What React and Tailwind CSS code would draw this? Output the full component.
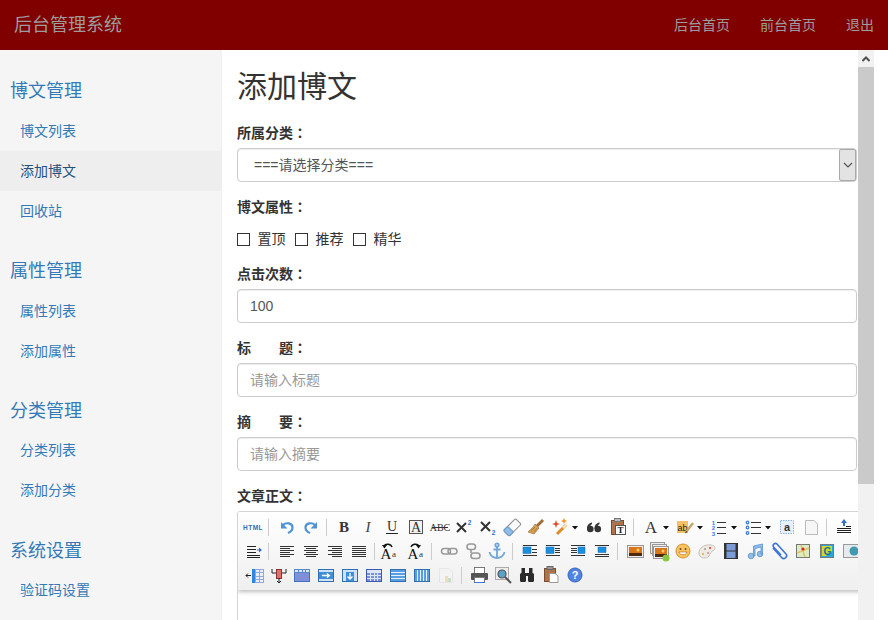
import React from "react";

const FONT = { fontFamily: '"Liberation Sans","Noto Sans CJK SC",sans-serif' };
const SERIF = '"Liberation Serif",serif';
const SANS = '"Liberation Sans",sans-serif';

function Lines({ rows, color = "#333" }) {
  return rows.map(([x1, x2, y], i) => <line key={i} x1={x1} x2={x2} y1={y + 0.5} y2={y + 0.5} stroke={color} strokeWidth="1" />);
}
function Grid({ x = 6, y = 6, w = 14, h = 12, cols = 3, rows = 3, fill = "#dbe6f6", stroke = "#3f74c4" }) {
  const v = [], s = [];
  for (let i = 1; i < cols; i++) v.push(Math.round(x + (w * i) / cols));
  for (let i = 1; i < rows; i++) s.push(Math.round(y + (h * i) / rows));
  return (
    <g>
      <rect x={x + 0.5} y={y + 0.5} width={w} height={h} fill={fill} stroke={stroke} />
      {v.map((a) => <line key={a} x1={a + 0.5} x2={a + 0.5} y1={y} y2={y + h} stroke={stroke} />)}
      {s.map((a) => <line key={a} x1={x} x2={x + w} y1={a + 0.5} y2={a + 0.5} stroke={stroke} />)}
    </g>
  );
}
const Sunset = ({ x = 5, y = 7, w = 14, h = 10 }) => (
  <g>
    <rect x={x - 0.5} y={y - 0.5} width={w + 1} height={h + 1} fill="#eee" stroke="#999" />
    <rect x={x + 1} y={y + 1} width={w - 2} height={h - 2} fill="#d9761a" />
    <rect x={x + 1} y={y + h - 4} width={w - 2} height={3} fill="#4a2a10" />
    <circle cx={x + w - 5} cy={y + 4} r="1.5" fill="#ffd060" />
  </g>
);
const Blue = ({ x, y, w, h }) => <rect x={x} y={y} width={w} height={h} fill="#1b8fe0" stroke="#1767b0" strokeWidth="0.5" />;

const ICONS = {
  html: <text x="12" y="14.5" textAnchor="middle" fontFamily={SANS} fontSize="6.5" fontWeight="700" letterSpacing="0.5" fill="#2f6fb5">HTML</text>,
  undo: <g fill="none"><path d="M8 10 C11 7 17.5 8 17.5 12.5 C17.5 15 15.5 17 13 18" stroke="#4f93d6" strokeWidth="2.2" /><path d="M6 7 L6 13.5 L12.5 13.5 Z" fill="#4f93d6" /></g>,
  redo: <g fill="none"><path d="M16 10 C13 7 6.5 8 6.5 12.5 C6.5 15 8.5 17 11 18" stroke="#4f93d6" strokeWidth="2.2" /><path d="M18 7 L18 13.5 L11.5 13.5 Z" fill="#4f93d6" /></g>,
  b: <text x="12" y="17" textAnchor="middle" fontFamily={SERIF} fontSize="15" fontWeight="700" fill="#333">B</text>,
  i: <text x="12" y="17" textAnchor="middle" fontFamily={SERIF} fontSize="15" fontStyle="italic" fill="#444">I</text>,
  u: <g><text x="12" y="15.5" textAnchor="middle" fontFamily={SERIF} fontSize="14" fill="#333">U</text><line x1="6" x2="18" y1="18.5" y2="18.5" stroke="#222" /></g>,
  boxa: <g><rect x="5.5" y="5.5" width="13" height="13" fill="#f2f2f2" stroke="#555" /><text x="12" y="17" textAnchor="middle" fontFamily={SERIF} fontSize="14" fill="#333">A</text></g>,
  abc: <g><text x="12" y="16" textAnchor="middle" fontFamily={SERIF} fontSize="10" fill="#333">ABC</text><line x1="4" x2="20" y1="12.5" y2="12.5" stroke="#333" /></g>,
  sup: <g><path d="M5 8 L14 17 M14 8 L5 17" stroke="#333" strokeWidth="2" /><text x="17.5" y="10" textAnchor="middle" fontFamily={SANS} fontSize="6.5" fontWeight="700" fill="#2d6fd6">2</text></g>,
  sub: <g><path d="M5 7 L14 16 M14 7 L5 16" stroke="#333" strokeWidth="2" /><text x="17.5" y="20" textAnchor="middle" fontFamily={SANS} fontSize="6.5" fontWeight="700" fill="#2d6fd6">2</text></g>,
  eraser: <g transform="rotate(-45 12 12)"><rect x="3.5" y="8.5" width="17" height="8" rx="1.5" fill="#fafafa" stroke="#8a8a8a" /><rect x="3.5" y="8.5" width="6" height="8" rx="1.5" fill="#8fbce8" stroke="#6a9acb" /></g>,
  brush: <g><path d="M18 4 L20 6 L14 12 L12 10 Z" fill="#a06a30" /><path d="M11 9 L15 13 L10 19 L4 17 C6 15 9 13 11 9 Z" fill="#d9a050" stroke="#8f6428" strokeWidth="0.6" /><path d="M7 16 L11 12 M10 17 L13 13" stroke="#8f6428" strokeWidth="0.6" /></g>,
  wand: <g><path d="M9 19 L18 10" stroke="#e08a2c" strokeWidth="3" /><path d="M15 13 L18 10" stroke="#f5e0b0" strokeWidth="3" /><path d="M8 5 L9 8 L12 9 L9 10 L8 13 L7 10 L4 9 L7 8 Z" fill="#e0492a" /><path d="M16 3 L17 5 L19 6 L17 7 L16 9 L15 7 L13 6 L15 5 Z" fill="#f29a2e" /></g>,
  quote: <g fill="#333"><circle cx="8.3" cy="14" r="3.3" /><path d="M5 14 C5 10 7 8 10 7.5 L10 9 C8.5 10 8 11 8 12 Z" /><circle cx="15.8" cy="14" r="3.3" /><path d="M12.5 14 C12.5 10 14.5 8 17.5 7.5 L17.5 9 C16 10 15.5 11 15.5 12 Z" /></g>,
  pastet: <g><rect x="5.5" y="5.5" width="12" height="14" fill="#b0724a" stroke="#7b4c2c" /><rect x="8.5" y="3.5" width="6" height="3" fill="#bbb" stroke="#777" /><rect x="9.5" y="10.5" width="10" height="9" fill="#fff" stroke="#555" /><text x="14.5" y="18" textAnchor="middle" fontFamily={SERIF} fontSize="9" fontWeight="700" fill="#222">T</text></g>,
  fonta: <text x="12" y="18" textAnchor="middle" fontFamily={SERIF} fontSize="17" fill="#333">A</text>,
  hilite: <g><rect x="4" y="6" width="11" height="12" fill="#f6c166" /><text x="9.5" y="15.5" textAnchor="middle" fontFamily={SANS} fontSize="9" fill="#222">ab</text><path d="M13 17 L20 8" stroke="#c9a36a" strokeWidth="2.4" /><path d="M12 18.5 L13 16 L14.5 17 Z" fill="#333" /></g>,
  ol: <g><text x="6.5" y="9.5" textAnchor="middle" fontFamily={SANS} fontSize="6" fontWeight="700" fill="#3a78dd">1</text><text x="6.5" y="15" textAnchor="middle" fontFamily={SANS} fontSize="6" fontWeight="700" fill="#3a78dd">2</text><text x="6.5" y="20.5" textAnchor="middle" fontFamily={SANS} fontSize="6" fontWeight="700" fill="#3a78dd">3</text><Lines rows={[[10, 19, 7], [10, 19, 12], [10, 19, 18]]} /></g>,
  ul: <g><circle cx="6.5" cy="7.5" r="1.3" fill="none" stroke="#3a78dd" strokeWidth="1.2" /><circle cx="6.5" cy="12.5" r="1.3" fill="none" stroke="#3a78dd" strokeWidth="1.2" /><circle cx="6.5" cy="18" r="1.3" fill="none" stroke="#3a78dd" strokeWidth="1.2" /><Lines rows={[[10, 20, 7], [10, 20, 12], [10, 20, 18]]} /></g>,
  boxaa: <g><rect x="5.5" y="5.5" width="13" height="13" fill="#e6effa" stroke="#8db2e6" strokeDasharray="1.5 1" /><text x="12" y="16" textAnchor="middle" fontFamily={SANS} fontSize="11" fontWeight="700" fill="#333">a</text></g>,
  doc: <path d="M6.5 5.5 H15 L18.5 9 V19.5 H6.5 Z" fill="#f6f6f6" stroke="#bbb" />,
  indentup: <g><path d="M12 4 L15 8 H13 V11 H11 V8 H9 Z" fill="#2e72c8" /><Lines rows={[[14, 19, 11], [5, 19, 13], [5, 19, 15], [5, 19, 17]]} color="#222" /></g>,
  indentin: <g><Lines rows={[[6, 15, 7], [6, 15, 10], [6, 15, 13], [6, 19, 16], [6, 19, 18]]} color="#222" /><path d="M16 10.5 H18 V8.5 L21 11 L18 13.5 V11.5 H16 Z" fill="#2e72c8" /></g>,
  al: <Lines rows={[[5, 19, 7], [5, 15, 9], [5, 19, 11], [5, 15, 13], [5, 19, 15], [5, 15, 17]]} />,
  ac: <Lines rows={[[5, 19, 7], [7, 17, 9], [5, 19, 11], [7, 17, 13], [5, 19, 15], [7, 17, 17]]} />,
  ar: <Lines rows={[[5, 19, 7], [9, 19, 9], [5, 19, 11], [9, 19, 13], [5, 19, 15], [9, 19, 17]]} />,
  aj: <Lines rows={[[5, 19, 7], [5, 19, 9], [5, 19, 11], [5, 19, 13], [5, 19, 15], [5, 19, 17]]} />,
  ltr: <g><text x="9" y="20" textAnchor="middle" fontFamily={SERIF} fontSize="15" fill="#111">A</text><text x="17" y="18" textAnchor="middle" fontFamily={SERIF} fontSize="9" fill="#333">a</text><path d="M15 8 C14 4.5 8 4.5 7.5 7" fill="none" stroke="#111" strokeWidth="1.3" /><path d="M5 6 L10 6 L7.5 9.5 Z" fill="#111" /></g>,
  rtl: <g><text x="9" y="20" textAnchor="middle" fontFamily={SERIF} fontSize="15" fill="#111">A</text><text x="17" y="18" textAnchor="middle" fontFamily={SERIF} fontSize="9" fill="#333">a</text><path d="M7 8 C8 4.5 14 4.5 14.5 7" fill="none" stroke="#111" strokeWidth="1.3" /><path d="M12 6 L17 6 L14.5 9.5 Z" fill="#111" /></g>,
  link: <g fill="none" stroke="#999" strokeWidth="1.5"><rect x="4.5" y="9.5" width="9" height="5.5" rx="2.7" /><rect x="11" y="9.5" width="9" height="5.5" rx="2.7" /></g>,
  unlink: <g fill="none" stroke="#999" strokeWidth="1.6"><rect x="6" y="5" width="8.5" height="5.5" rx="2.7" /><rect x="10" y="14" width="9" height="5.5" rx="2.7" /><path d="M10 10.5 V14" /></g>,
  anchor: <g fill="none" stroke="#6ea5dc" strokeWidth="1.8"><circle cx="12" cy="6" r="1.7" /><path d="M12 8 V19 M8.5 10.5 H15.5 M4.5 13 C5 17 9 19 12 19 C15 19 19 17 19.5 13" /></g>,
  imgl: <g><Lines rows={[[5, 19, 6], [14, 19, 10], [14, 19, 13], [5, 19, 16]]} /><Blue x={5} y={8} w={8} h={6.5} /></g>,
  imgr: <g><Lines rows={[[4, 18, 6], [13, 18, 9], [13, 18, 11], [13, 18, 13], [4, 18, 16]]} /><Blue x={4} y={8} w={8} h={6.5} /></g>,
  imgn: <g><Lines rows={[[5, 19, 6], [5, 11, 9], [5, 11, 11], [5, 11, 13], [5, 19, 16]]} /><Blue x={12} y={8} w={7} h={6.5} /></g>,
  imgc: <g><Lines rows={[[5, 19, 6], [5, 19, 15], [5, 19, 17]]} /><Blue x={8} y={8} w={8} h={5.5} /></g>,
  image: <Sunset x={5} y={7} w={15} h={11} />,
  multi: <g><rect x="3.5" y="3.5" width="14" height="11" fill="#eee" stroke="#999" /><rect x="5.5" y="5.5" width="14" height="11" fill="#eee" stroke="#999" /><Sunset x={7} y={8} w={14} h={11} /><circle cx="19" cy="19" r="3.5" fill="#8cc63f" /></g>,
  emoji: <g><circle cx="12" cy="12" r="7" fill="#f7c35c" stroke="#dd8f2e" /><circle cx="9.5" cy="10" r="1" fill="#7a4a1a" /><circle cx="14.5" cy="10" r="1" fill="#7a4a1a" /><path d="M8 13 H16 C15.5 16.5 8.5 16.5 8 13 Z" fill="#fff" stroke="#a35f20" strokeWidth="0.6" /></g>,
  palette: <g><path d="M4 15 C3 9 10 5 16 6 C20 6.5 21 9 19 11 C16 13 15 14 14 17 C12 20 5 20 4 15 Z" fill="#eeeae2" stroke="#c8c4ba" /><circle cx="15" cy="9" r="1" fill="#d33" /><circle cx="10" cy="10" r="1" fill="#9a9" /><circle cx="13" cy="14" r="1" fill="#d88" /><circle cx="8" cy="15" r="1" fill="#e9a93a" /></g>,
  video: <g><rect x="5" y="4" width="14" height="16" fill="#333" /><rect x="7.5" y="5" width="9" height="6.5" fill="#7b9ad8" /><rect x="7.5" y="12.5" width="9" height="6.5" fill="#7b9ad8" /></g>,
  music: <g fill="#8fbce8" stroke="#5c93d1" strokeWidth="0.8"><circle cx="8" cy="17" r="2.8" /><circle cx="17" cy="15" r="2.8" /><path d="M10.5 17 V7 L19.5 5 V15 H18 V8 L12 9.5 V17 Z" /></g>,
  clip: <g fill="none" stroke="#3c74d8" strokeWidth="1.6"><path d="M6 9 L15 19 C18 21 21 17 19 15 L10 5 C8.5 3.5 5 5 6.5 8 L14 16" /></g>,
  map: <g><rect x="5.5" y="5.5" width="13" height="13" fill="#d9ecc4" stroke="#777" /><path d="M6 14 L18 9 M10 6 L14 18" stroke="#e2c26a" strokeWidth="1.5" /><circle cx="12" cy="10" r="1.6" fill="#d22" /></g>,
  gmap: <g><rect x="5.5" y="5.5" width="13" height="13" fill="#29a8dd" stroke="#777" /><path d="M7 7 H17 V12 L11 17 H7 Z" fill="#cfd926" /><text x="12.5" y="16" textAnchor="middle" fontFamily={SANS} fontSize="10" fontWeight="700" fill="#1a6aa8">G</text></g>,
  globe: <g><rect x="4.5" y="5.5" width="16" height="13" fill="#e6e9ee" stroke="#999" /><circle cx="15" cy="12" r="4.5" fill="#3d9ab0" /></g>,
  tInsCol: <g><Grid x={13} y={6} w={8} h={13} cols={2} rows={4} fill="#eaf0fa" stroke="#8fa9dc" /><rect x="10" y="6" width="3" height="14" fill="#2f86e0" /><path d="M4 12.5 H9 M6 10.5 L4 12.5 L6 14.5" stroke="#222" fill="none" /></g>,
  tDelCol: <g><rect x="10.5" y="6.5" width="5" height="9" fill="#e07070" stroke="#8f3030" /><path d="M6 6 V10 H10 M20 6 V10 H16 M13 15 V20 M11 18 L13 20 L15 18" fill="none" stroke="#222" /></g>,
  tMerge: <g><rect x="4.5" y="6.5" width="15" height="12" fill="#8090d8" stroke="#3f74c4" /><Grid x={4} y={6} w={15} h={3} cols={4} rows={1} fill="#dbe6f6" stroke="#5a87cc" /></g>,
  tRight: <g><rect x="4.5" y="6.5" width="15" height="12" fill="#cfe2f7" stroke="#2f6fb5" /><rect x="5" y="9" width="14" height="7" fill="#3f8fd6" /><path d="M8 12.5 H15 M13 10.5 L15.5 12.5 L13 14.5" stroke="#fff" strokeWidth="1.3" fill="none" /></g>,
  tDown: <g><rect x="4.5" y="6.5" width="15" height="12" fill="#cfe2f7" stroke="#2f6fb5" /><rect x="8" y="9" width="8" height="9" fill="#3f8fd6" /><path d="M12 10 V16 M9.5 13.5 L12 16 L14.5 13.5" stroke="#fff" strokeWidth="1.3" fill="none" /></g>,
  tGrid: <g><Grid x={4} y={6} w={15} h={12} cols={4} rows={4} fill="#7d8fdc" stroke="#dbe6f6" /><rect x="4.5" y="6.5" width="15" height="12" fill="none" stroke="#3a58b4" /><rect x="5" y="7" width="14" height="2.5" fill="#dbe6f6" /></g>,
  tRows: <g><Grid x={4} y={6} w={15} h={12} cols={1} rows={4} fill="#5a9ee0" stroke="#e6f0fb" /><rect x="4.5" y="6.5" width="15" height="12" fill="none" stroke="#2f6fb5" /></g>,
  tCols: <g><Grid x={4} y={6} w={15} h={12} cols={5} rows={1} fill="#5a9ee0" stroke="#e6f0fb" /><rect x="4.5" y="6.5" width="15" height="12" fill="none" stroke="#2f6fb5" /></g>,
  tFade: <g opacity="0.55"><path d="M5.5 5.5 H15 L18.5 9 V19.5 H5.5 Z" fill="#f4f4f4" stroke="#ddd" /><rect x="11" y="13" width="3" height="6" fill="#e8d28a" /><rect x="14" y="15" width="3" height="4" fill="#a8d0a0" /></g>,
  print: <g><rect x="7.5" y="4.5" width="10" height="6" fill="#fff" stroke="#777" /><rect x="4" y="10" width="17" height="7" rx="1" fill="#555" /><rect x="7.5" y="14.5" width="10" height="5" fill="#fff" stroke="#777" /><rect x="7" y="19" width="11" height="1" fill="#3a78dd" /></g>,
  preview: <g><rect x="4.5" y="4.5" width="13" height="12" fill="#eee" stroke="#aaa" /><circle cx="11" cy="11" r="4" fill="#5aa0c8" stroke="#555" strokeWidth="1.2" /><path d="M14 14 L20 20" stroke="#555" strokeWidth="2.2" /></g>,
  search: <g fill="#2a2a2a"><rect x="5" y="10" width="6" height="9" rx="1.5" /><rect x="13" y="10" width="6" height="9" rx="1.5" /><rect x="6.5" y="5" width="3.5" height="6" /><rect x="14" y="5" width="3.5" height="6" /><rect x="10" y="10" width="4" height="3" /></g>,
  pastep: <g><rect x="5.5" y="5.5" width="11" height="13" fill="#b0724a" stroke="#7b4c2c" /><rect x="8" y="3.5" width="6" height="3" fill="#999" stroke="#666" /><path d="M10.5 10.5 H16 L19 13 V19.5 H10.5 Z" fill="#fff" stroke="#999" /></g>,
  help: <g><circle cx="12" cy="12" r="7" fill="#4f84e2" stroke="#3564bb" /><text x="12" y="16" textAnchor="middle" fontFamily={SANS} fontSize="11" fontWeight="700" fill="#fff">?</text></g>,
};

const Icon = ({ n }) => (
  <svg width="24" height="24" viewBox="0 0 24 24" className="block shrink-0">{ICONS[n]}</svg>
);
const Caret = () => (
  <svg width="10" height="24" viewBox="0 0 10 24" className="block shrink-0"><path d="M0 11 H6 L3 14.5 Z" fill="#111" /></svg>
);
const Sep = ({ className }) => (
  <div className={`h-6 shrink-0 flex items-center ${className}`}><div className="ml-[3px] w-px h-[17px] bg-[#ccc]" /></div>
);
const Sep9 = () => <Sep className="w-[9px]" />;

function ToolRow({ names, className = "" }) {
  return <div className={`flex h-6 ${className}`}>{names.map((n, i) => (n === "|" ? <Sep9 key={i} /> : n === "v" ? <Caret key={i} /> : n === "|10" ? <Sep key={i} className="w-[10px]" /> : n === "|6" ? <Sep key={i} className="w-[6px]" /> : n === "_3" ? <div key={i} className="w-[3px] shrink-0" /> : <Icon key={i} n={n} />))}</div>;
}

function Toolbar() {
  return (
    <div className="border border-[#d4d4d4] rounded-[3px] overflow-hidden h-[130px] w-[660px]">
      <div className="pt-[3px] pb-[3px] pl-[3px] overflow-hidden bg-gradient-to-b from-white to-[#efefef] shadow-[0_2px_4px_rgba(0,0,0,0.25)] relative">
        <ToolRow names={["html", "|10", "undo", "redo", "|", "b", "i", "u", "boxa", "abc", "sup", "sub", "eraser", "brush", "wand", "v", "quote", "pastet", "|", "fonta", "v", "hilite", "v", "ol", "v", "ul", "v", "boxaa", "doc", "|", "indentup"]} />
        <ToolRow names={["indentin", "|10", "al", "ac", "ar", "aj", "|6", "ltr", "_3", "rtl", "|", "link", "unlink", "anchor", "|", "imgl", "imgr", "imgn", "imgc", "|", "image", "multi", "emoji", "palette", "video", "music", "clip", "map", "gmap", "globe"]} />
        <ToolRow className="ml-px" names={["tInsCol", "tDelCol", "tMerge", "tRight", "tDown", "tGrid", "tRows", "tCols", "tFade", "|", "print", "preview", "search", "pastep", "help"]} />
      </div>
    </div>
  );
}

const Label = ({ children }) => (
  <div className="h-5 mb-[5px] text-sm leading-[18px] font-bold text-[#333]">
    {children}
    <span className="font-['Noto_Sans_CJK_TC']">：</span>
  </div>
);
const inputCls = "block w-full h-[34px] px-3 text-sm text-[#555] bg-white border border-[#ccc] rounded outline-none placeholder:text-[#999] shadow-[inset_0_1px_1px_rgba(0,0,0,0.075)]";

const Check = ({ text }) => (
  <label className="flex items-center text-sm text-[#333] mr-[9.5px]">
    <input type="checkbox" className="appearance-none w-[13px] h-[13px] border border-[#333] bg-white m-0 rounded-none" />
    <span className="ml-[7.5px]">{text}</span>
  </label>
);

function SideGroup({ title, items, active, pull, gap }) {
  return (
    <div className={gap}>
      <div className="h-[41px] pl-[10px] flex items-center text-lg text-[#337ab7]">{title}</div>
      <div className={pull ? "-mt-px" : ""}>
        {items.map((t) => (
          <div key={t} className={`h-10 pl-5 flex items-center text-sm ${t === active ? "bg-[#eee] text-[#23527c]" : "text-[#337ab7]"}`}>{t}</div>
        ))}
      </div>
    </div>
  );
}

export default function App() {
  return (
    <div className="w-[888px] h-[620px] overflow-hidden flex flex-col bg-white" style={FONT}>
      <header className="h-[50px] shrink-0 bg-[#800000] flex items-center justify-between pl-[14px] pr-[14px] text-[#9d9d9d]">
        <div className="text-lg">后台管理系统</div>
        <nav className="flex gap-[30px] text-sm">
          <span>后台首页</span>
          <span>前台首页</span>
          <span>退出</span>
        </nav>
      </header>
      <div className="flex flex-1 min-h-0">
        <aside className="w-[222px] shrink-0 bg-[#f5f5f5] border-r border-[#eee] pt-5 overflow-hidden">
          <SideGroup title="博文管理" items={["博文列表", "添加博文", "回收站"]} active="添加博文" gap="mb-[19px]" />
          <SideGroup title="属性管理" items={["属性列表", "添加属性"]} gap="mb-[19px]" />
          <SideGroup title="分类管理" items={["分类列表", "添加分类"]} pull gap="mb-5" />
          <SideGroup title="系统设置" items={["验证码设置"]} pull />
        </aside>
        <main className="w-[636px] shrink-0 pl-[15px] pr-px overflow-hidden">
          <h1 className="h-[73px] pt-[17px] text-[30px] leading-10 text-[#333] font-normal">添加博文</h1>
          <div className="mb-[15px]">
            <Label>所属分类</Label>
            <div className="relative">
              <select className={`${inputCls} appearance-none pl-4`} defaultValue="0">
                <option value="0">===请选择分类===</option>
              </select>
              <div className="absolute right-px top-px w-[17px] h-8 bg-[#e3e3e3] border border-[#a9a9a9] rounded-[2px] flex items-center justify-center">
                <svg width="10" height="6" viewBox="0 0 10 6"><path d="M1 1 L5 5 L9 1" fill="none" stroke="#555" strokeWidth="1.2" /></svg>
              </div>
            </div>
          </div>
          <div className="mb-[15px]">
            <Label>博文属性</Label>
            <div className="flex items-center h-[27px] pt-[7px]">
              <Check text="置顶" />
              <Check text="推荐" />
              <Check text="精华" />
            </div>
          </div>
          <div className="mb-[15px]">
            <Label>点击次数</Label>
            <input className={inputCls} defaultValue="100" />
          </div>
          <div className="mb-[15px]">
            <Label>标&emsp;&emsp;题</Label>
            <input className={inputCls} placeholder="请输入标题" />
          </div>
          <div className="mb-[15px]">
            <Label>摘&emsp;&emsp;要</Label>
            <input className={inputCls} placeholder="请输入摘要" />
          </div>
          <Label>文章正文</Label>
          <Toolbar />
        </main>
        <div className="w-4 shrink-0 bg-[#f1f1f1] flex flex-col">
          <div className="h-[17px] flex items-center justify-center">
            <svg width="8" height="6" viewBox="0 0 8 6"><path d="M0.5 5 L4 1.5 L7.5 5" fill="none" stroke="#505050" strokeWidth="2" /></svg>
          </div>
          <div className="h-[417px] bg-[#cacaca]" />
        </div>
      </div>
    </div>
  );
}
